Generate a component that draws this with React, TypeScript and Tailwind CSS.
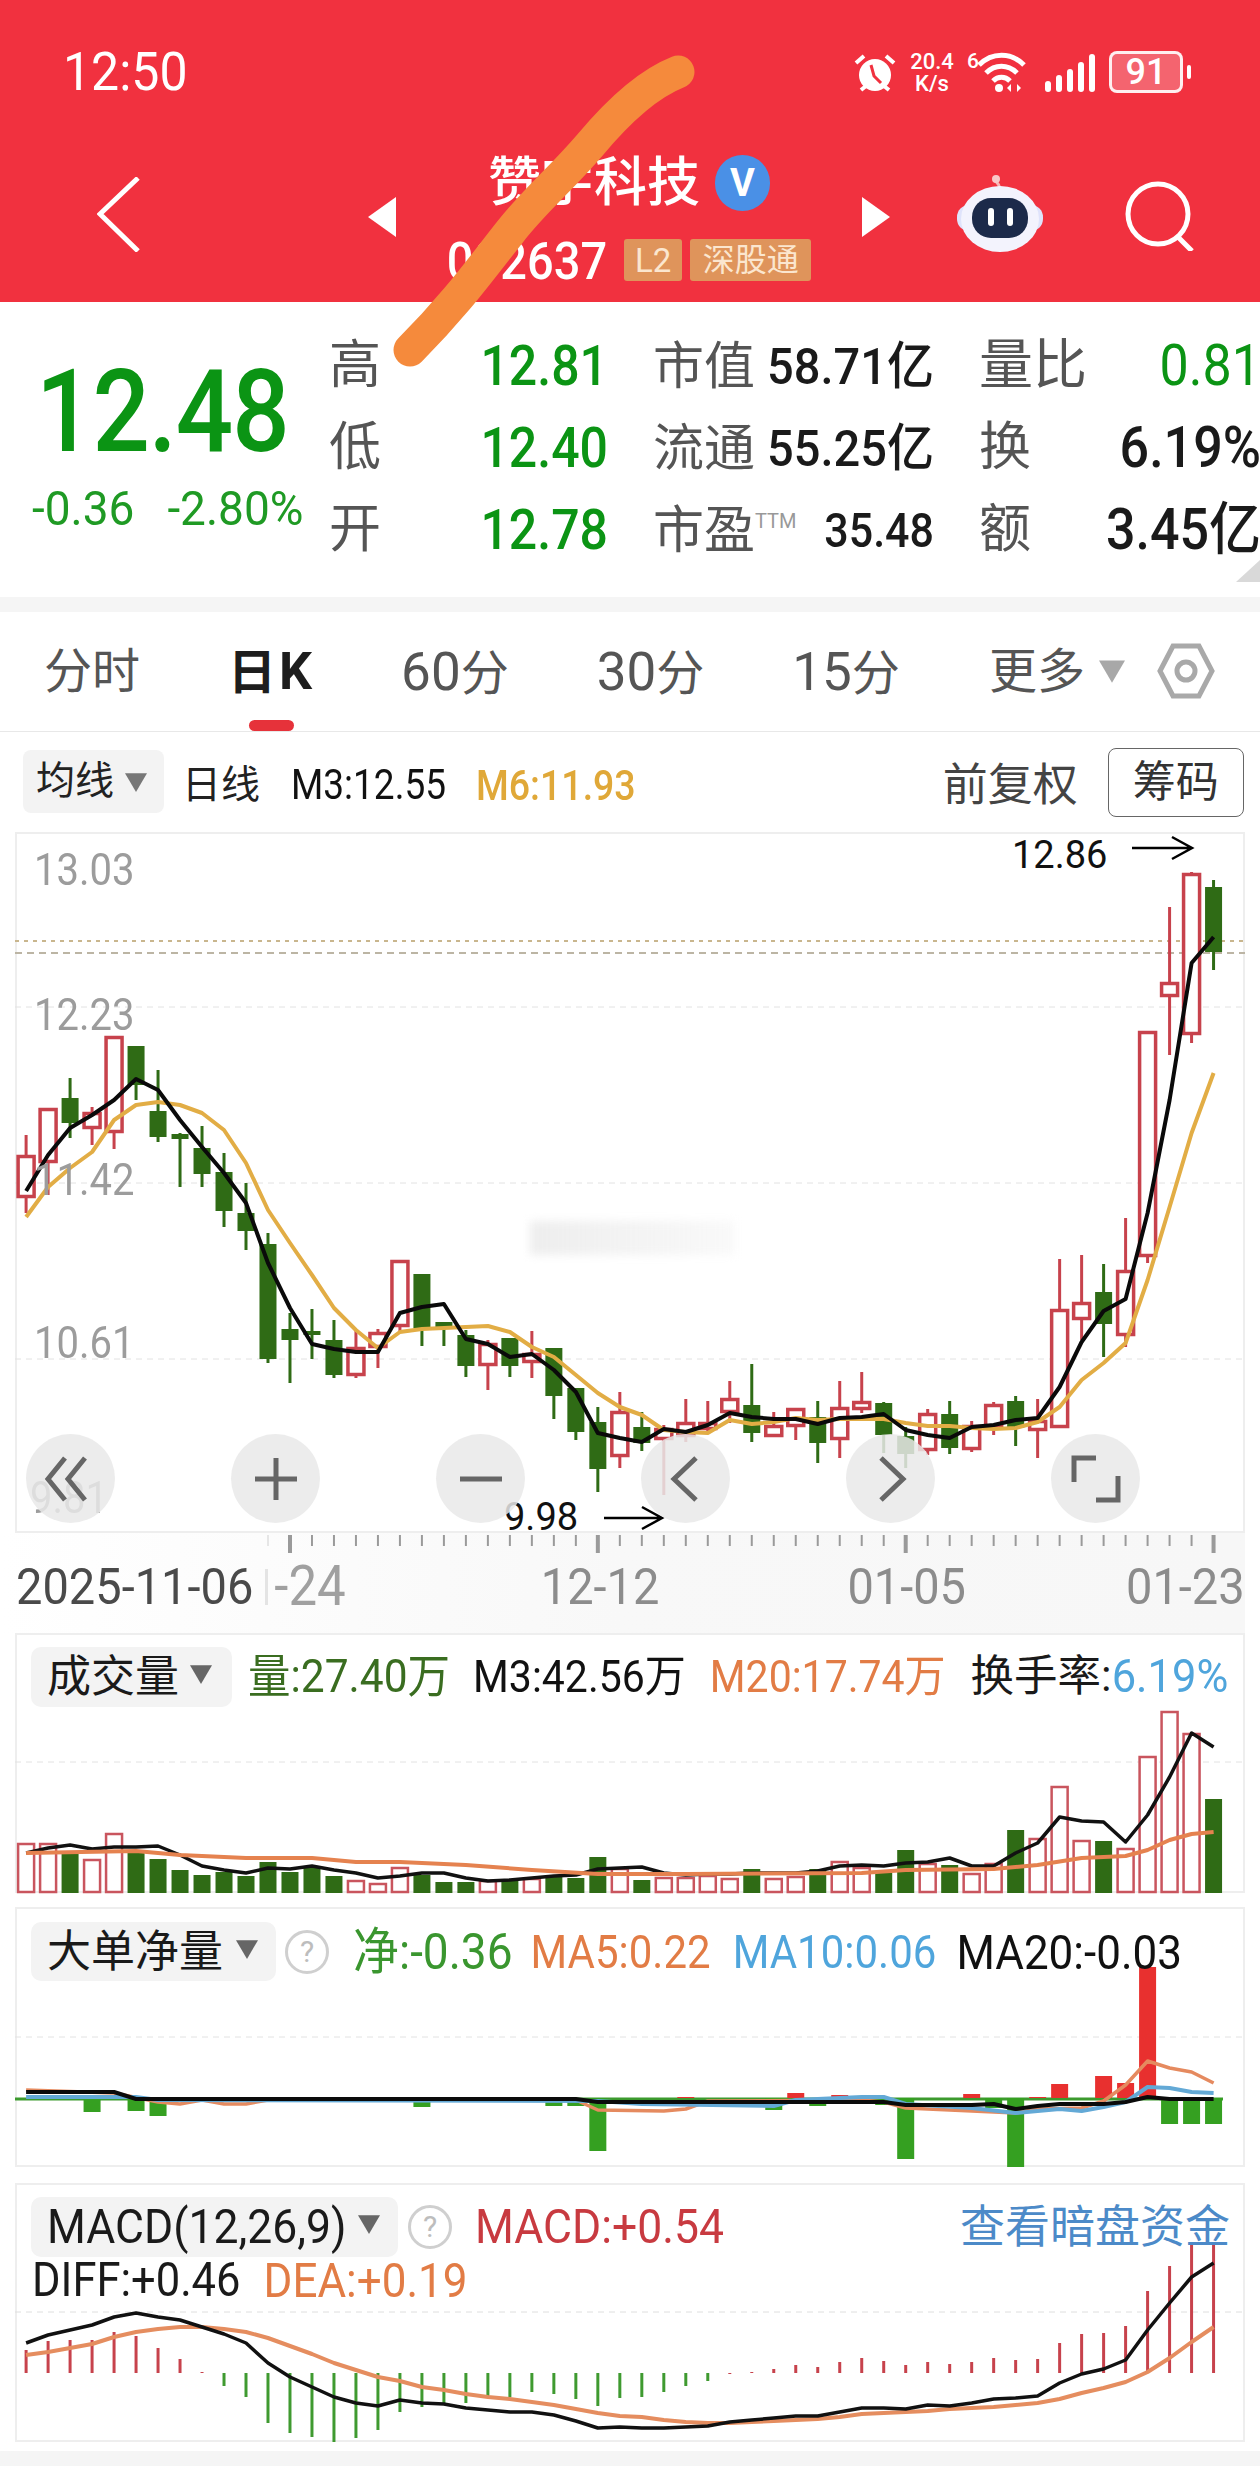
import React from "react";

const X = (i: number) => 26.1 + 21.99 * i;
const pts = (a: number[]) => a.map((y, i) => `${X(i).toFixed(1)},${y}`).join(" ");
const sparse = (a: [number, number][]) => a.map(([i, y]) => `${X(i).toFixed(1)},${y}`).join(" ");

const RED = "#c7424c";
const GREEN = "#2f6b15";

type C = ["r" | "g", number, number, number, number];
const candles: C[] = [
  ["r",1135,1213,1155,1198],["r",1108,1195,1108,1163],["g",1078,1138,1098,1123],["r",1107,1145,1112,1129],["r",1036,1149,1036,1133],
  ["g",1046,1100,1046,1085],["g",1070,1142,1111,1137],["g",1133,1187,1134,1139],["g",1126,1187,1148,1174],["g",1153,1227,1172,1211],
  ["g",1183,1250,1213,1231],["g",1233,1363,1244,1359],["g",1313,1383,1329,1340],["g",1309,1359,1331,1335],["g",1320,1378,1340,1375],
  ["r",1330,1378,1347,1376],["r",1329,1368,1332,1348],["r",1260,1333,1260,1327],["g",1274,1346,1274,1328],["g",1322,1346,1322,1328],
  ["g",1330,1377,1335,1366],["r",1340,1390,1343,1366],["g",1338,1377,1338,1366],["r",1331,1378,1353,1363],["g",1348,1419,1348,1396],
  ["g",1388,1440,1388,1432],["g",1407,1492,1422,1469],["r",1392,1468,1411,1457],["g",1412,1451,1427,1443],["r",1425,1495,1428,1440],
  ["r",1399,1442,1422,1437],["r",1401,1433,1422,1430],["r",1381,1423,1398,1413],["g",1364,1442,1405,1433],["r",1412,1437,1425,1437],
  ["r",1408,1440,1408,1427],["g",1401,1463,1417,1443],["r",1381,1458,1407,1440],["r",1372,1413,1401,1410],["g",1402,1453,1403,1435],
  ["g",1427,1468,1436,1454],["r",1409,1455,1413,1451],["g",1401,1454,1414,1448],["r",1421,1452,1425,1450],["r",1402,1435,1404,1428],
  ["g",1396,1446,1401,1428],["r",1399,1458,1420,1431],["r",1259,1428,1309,1428],["r",1255,1340,1302,1320],["g",1264,1357,1292,1324],
  ["r",1218,1347,1270,1336],["r",1031,1263,1031,1257],["r",907,1055,982,997],["r",872,1043,873,1035],["g",880,970,887,952],
];
const m3 = [1191,1155,1128,1115,1100,1079,1090,1120,1147,1173,1203,1263,1308,1344,1349,1352,1352,1313,1307,1304,1339,1344,1357,1354,1370,1392,1433,1438,1442,1429,1432,1425,1413,1417,1419,1419,1424,1418,1417,1414,1430,1435,1438,1427,1425,1420,1418,1387,1342,1311,1299,1213,1100,963,937];
const m6 = [1217,1187,1168,1152,1120,1105,1102,1105,1113,1130,1163,1210,1243,1275,1308,1330,1348,1332,1329,1328,1327,1326,1332,1347,1357,1375,1393,1407,1415,1430,1432,1433,1420,1424,1422,1418,1420,1419,1419,1419,1423,1426,1426,1428,1429,1428,1422,1407,1380,1363,1343,1280,1207,1133,1073];

const vol = [1843,1843,1853,1859,1833,1853,1859,1870,1875,1872,1876,1862,1872,1868,1876,1880,1883,1867,1875,1882,1882,1880,1880,1878,1875,1878,1857,1868,1880,1877,1877,1875,1878,1869,1878,1876,1869,1861,1867,1873,1850,1863,1865,1873,1863,1830,1838,1786,1840,1841,1848,1756,1711,1733,1799];
const volBlack = [1853,1848,1845,1849,1847,1847,1846,1855,1866,1870,1873,1868,1869,1866,1870,1873,1878,1876,1873,1873,1878,1881,1880,1878,1876,1875,1869,1868,1867,1873,1875,1874,1874,1873,1873,1873,1871,1866,1865,1866,1863,1862,1858,1866,1866,1853,1843,1817,1821,1822,1842,1815,1777,1733,1747];
const volOrange: [number, number][] = [[0,1853],[5,1851],[7,1855],[10,1858],[13,1858],[15,1862],[17,1862],[20,1865],[23,1870],[26,1874],[30,1874],[38,1873],[40,1870],[44,1869],[46,1865],[48,1858],[50,1856],[51,1850],[52,1840],[53,1834],[54,1832]];

const bigBars: [number, number, "r" | "g"][] = [[3,2112,"g"],[5,2111,"g"],[6,2116,"g"],[18,2107,"g"],[25,2106,"g"],[26,2151,"g"],[24,2106,"g"],[30,2097,"r"],[34,2110,"g"],[35,2093,"r"],[36,2106,"g"],[37,2095,"r"],[39,2105,"g"],[40,2159,"g"],[43,2094,"r"],[44,2108,"g"],[45,2167,"g"],[46,2097,"r"],[47,2084,"r"],[49,2076,"r"],[50,2083,"r"],[51,1967,"r"],[52,2124,"g"],[53,2124,"g"],[54,2124,"g"]];
const bigOrange: [number, number][] = [[0,2090],[4,2093],[6,2102],[7,2104],[8,2100],[9,2104],[10,2104],[11,2100],[25,2100],[26,2110],[29,2111],[30,2109],[31,2101],[38,2100],[39,2102],[40,2108],[45,2113],[46,2109],[48,2108],[49,2101],[50,2085],[51,2061],[52,2068],[53,2072],[54,2083]];
const bigBlue: [number, number][] = [[0,2097],[5,2097],[6,2100],[26,2101],[28,2104],[34,2106],[35,2100],[38,2097],[39,2097],[40,2104],[43,2108],[45,2113],[46,2111],[47,2109],[48,2111],[49,2107],[50,2102],[51,2087],[52,2088],[53,2092],[54,2093]];
const bigBlack: [number, number][] = [[0,2092],[4,2092],[5,2099],[25,2099],[26,2102],[39,2102],[40,2105],[43,2105],[44,2104],[45,2109],[46,2106],[47,2104],[49,2104],[50,2102],[51,2097],[52,2099],[54,2099]];

const macd = [2350,2341,2340,2340,2332,2336,2348,2359,2372,2386,2397,2423,2433,2437,2442,2438,2430,2412,2407,2403,2403,2397,2397,2392,2394,2399,2406,2398,2397,2392,2386,2381,2374,2372,2369,2365,2367,2362,2358,2361,2365,2362,2364,2362,2358,2360,2359,2343,2334,2333,2326,2291,2266,2243,2243];
const macdBlack = [2343,2335,2330,2325,2317,2313,2317,2320,2327,2334,2343,2363,2377,2387,2397,2403,2406,2400,2403,2404,2408,2410,2412,2412,2415,2421,2428,2427,2428,2428,2427,2426,2422,2420,2418,2416,2416,2412,2408,2408,2409,2405,2406,2403,2399,2398,2396,2383,2374,2369,2360,2330,2303,2277,2263];
const macdOrange = [2355,2352,2348,2344,2337,2332,2329,2327,2327,2329,2332,2338,2346,2354,2363,2370,2377,2381,2387,2390,2394,2397,2399,2402,2405,2409,2413,2416,2417,2420,2422,2423,2423,2422,2421,2420,2419,2417,2414,2413,2412,2411,2409,2408,2407,2405,2403,2399,2393,2388,2382,2372,2358,2342,2327];

const Tri = ({ className, color }: { className: string; color: string }) => (
  <svg viewBox="0 0 20 20" className={className}><polygon points="0,2 20,2 10,19" fill={color} /></svg>
);
const Help = ({ className }: { className: string }) => (
  <div className={`flex h-[44px] w-[44px] items-center justify-center rounded-full border-[3px] border-[#cfcfcf] text-[30px] leading-none text-[#bdbdbd] ${className}`}>?</div>
);
const Round = ({ children }: { children: React.ReactNode }) => (
  <div className="flex h-[89px] w-[89px] items-center justify-center rounded-full bg-[#e9e9e9]/85">
    <svg viewBox="0 0 60 60" className="h-[60px] w-[60px]" fill="none" stroke="#666" strokeWidth="5">{children}</svg>
  </div>
);

function App() {
  return (
    <div className="relative h-[2479px] w-[1260px] overflow-hidden bg-white font-['Roboto','Noto_Sans_CJK_SC',sans-serif]">
      {/* header */}
      <header className="h-[302px] bg-[#f1313f] text-white">
        <div className="flex h-[150px] items-start pl-[63px] pt-[46px]">
          <span className="inline-block w-[125px] scale-y-[1.08] text-[50px] leading-[52px]">12:50</span>
          <svg viewBox="0 0 42 42" className="ml-[666px] mt-[6px] h-[42px] w-[42px]" fill="none">
            <circle cx="21" cy="23" r="16" fill="#fff" />
            <path d="M17 13l3 11 7 7" strokeWidth="3" stroke="#f1313f" />
            <path d="M2 11l8-7M40 11l-8-7M7 38l5-4M35 38l-5-4" strokeWidth="4" stroke="#fff" />
          </svg>
          <div className="ml-[10px] mt-[5px] w-[52px] text-center text-[22px] font-medium leading-[22px]">20.4<br />K/s</div>
          <span className="ml-[9px] mt-[4px] text-[21px] font-medium leading-[22px]">6</span>
          <svg viewBox="0 0 50 42" className="ml-[-3px] mt-[6px] h-[42px] w-[50px]" fill="none" stroke="#fff" strokeWidth="5">
            <path d="M3 13c13-13 32-13 45 0M10 21c9-9 22-9 31 0M17 29c5-5 12-5 17 0" />
            <circle cx="23" cy="36" r="4" fill="#fff" stroke="none" />
            <path d="M35 32l-4 4 4 4zM41 32l4 4-4 4z" fill="#fff" stroke="none" />
          </svg>
          <svg viewBox="0 0 50 38" className="ml-[19px] mt-[8px] h-[38px] w-[50px]" fill="#fff">
            <rect x="0" y="27" width="6" height="11" rx="3" /><rect x="11" y="21" width="6" height="17" rx="3" /><rect x="22" y="15" width="6" height="23" rx="3" /><rect x="33" y="8" width="6" height="30" rx="3" /><rect x="44" y="0" width="6" height="38" rx="3" />
          </svg>
          <div className="ml-[14px] mt-[5px] flex h-[42px] w-[74px] items-center justify-center rounded-[8px] border-[3px] border-white/90 bg-white/25 text-[36px] font-medium leading-none">91</div>
          <div className="ml-[4px] mt-[19px] h-[14px] w-[4px] rounded-full bg-white" />
        </div>
        <div className="flex items-start pl-[97px]">
          <svg viewBox="0 0 43 75" className="mt-[27px] h-[75px] w-[43px]" fill="none" stroke="#fff" strokeWidth="5"><path d="M41 1L3 37l38 37" /></svg>
          <svg viewBox="0 0 28 40" className="ml-[228px] mt-[47px] h-[40px] w-[28px]"><polygon points="28,0 0,20 28,40" fill="#fff" /></svg>
          <div className="flex w-[466px] flex-col items-center">
            <div className="mt-[5px] flex h-[56px] items-center">
              <span className="text-[53px] font-medium leading-none">赞宇科技</span>
              <div className="ml-[15px] flex h-[56px] w-[55px] items-center justify-center rounded-full bg-[#4a90e6] text-[38px] font-bold leading-none">V</div>
            </div>
            <div className="mt-[28px] flex h-[42px] items-center">
              <span className="inline-block scale-y-[1.12] text-[47px] font-medium leading-none">002637</span>
              <div className="ml-[17px] flex h-[42px] w-[58px] items-center justify-center rounded-[3px] bg-[#df945b] text-[33px] leading-none text-[#fbe6cf]">L2</div>
              <div className="ml-[8px] flex h-[42px] w-[121px] items-center justify-center rounded-[3px] bg-[#df945b] text-[32px] leading-none text-[#fbe6cf]">深股通</div>
            </div>
          </div>
          <svg viewBox="0 0 28 40" className="mt-[47px] h-[40px] w-[28px]"><polygon points="0,0 28,20 0,40" fill="#fff" /></svg>
          <svg viewBox="0 0 86 78" className="ml-[67px] mt-[25px] h-[78px] w-[86px]">
            <path d="M43 14C42 6 37 8 38 3" fill="none" stroke="#f7b7b7" strokeWidth="3" />
            <circle cx="39" cy="4" r="4" fill="#f9c7c7" />
            <rect x="0" y="30" width="86" height="26" rx="12" fill="#dfe3fb" />
            <ellipse cx="43" cy="44" rx="39" ry="33" fill="#f3f3fd" />
            <rect x="15" y="23" width="56" height="40" rx="19" fill="#1c2a4a" />
            <rect x="31" y="33" width="6" height="18" rx="3" fill="#fff" />
            <rect x="50" y="33" width="6" height="18" rx="3" fill="#fff" />
          </svg>
          <svg viewBox="0 0 70 70" className="ml-[82px] mt-[31px] h-[70px] w-[70px]" fill="none" stroke="#fff" strokeWidth="5"><circle cx="33" cy="33" r="30" /><path d="M52 55l15 15" /></svg>
        </div>
      </header>

      {/* orange scribble */}
      <svg className="pointer-events-none absolute left-0 top-0 z-20 h-[400px] w-[800px]" viewBox="0 0 800 400" fill="none">
        <path d="M678 72C645 85 615 115 590 145C560 180 535 200 510 232C480 270 455 305 410 350" stroke="#f58a3c" strokeWidth="33" strokeLinecap="round" />
      </svg>

      {/* quote */}
      <section className="flex h-[295px] items-start">
        <div className="ml-[32px] flex w-[297px] flex-col pt-[62px]">
          <span className="ml-[4px] inline-block scale-y-[1.13] text-[101px] font-medium leading-[98px] tracking-[-1px] text-[#0b9414]">12.48</span>
          <div className="mt-[26px] flex gap-[33px] whitespace-nowrap text-[46px] leading-[40px] text-[#1f9a24]">
            <span className="inline-block scale-y-[1.05]">-0.36</span><span className="inline-block scale-y-[1.05]">-2.80%</span>
          </div>
        </div>
        <div className="grid w-[931px] grid-cols-[279px_281px_282px] gap-x-[45px] gap-y-[30px] pt-[38px]">
          {[
            ["高", "12.81", "市值", "58.71", "量比", "0.81", "text-[#0b9414]", "亿"],
            ["低", "12.40", "流通", "55.25", "换", "6.19%", "text-[#1a1a1a] font-medium", "亿"],
            ["开", "12.78", "市盈", "35.48", "额", "3.45亿", "text-[#1a1a1a] font-medium", ""],
          ].map((r, i) => (
            <React.Fragment key={i}>
              <div className="flex h-[52px] items-center justify-between">
                <span className="text-[52px] leading-none text-[#555]">{r[0]}</span>
                <span className="inline-block scale-y-[1.1] text-[50px] font-medium leading-none text-[#0b9414]">{r[1]}</span>
              </div>
              <div className="flex h-[52px] items-center justify-between">
                <span className="flex items-start text-[51px] leading-none text-[#555]">{r[2]}{i === 2 && <span className="mt-[6px] text-[20px] leading-none text-[#999]">TTM</span>}</span>
                {i === 2 ? (
                  <span className="inline-block scale-y-[1.12] text-[43px] font-medium leading-none text-[#1a1a1a]">{r[3]}</span>
                ) : (
                  <span className="inline-block scale-y-[1.08] text-[47px] font-medium leading-none text-[#1a1a1a]">{r[3]}{r[7]}</span>
                )}
              </div>
              <div className="flex h-[52px] items-center justify-between">
                <span className={i === 0 ? "text-[54px] leading-none text-[#555]" : "text-[52px] leading-none text-[#555]"}>{r[4]}</span>
                <span className={`inline-block scale-y-[1.1] text-[52px] leading-none ${r[6]}`}>{r[5]}</span>
              </div>
            </React.Fragment>
          ))}
        </div>
      </section>
      <svg viewBox="0 0 24 22" className="absolute left-[1236px] top-[560px] h-[22px] w-[24px]"><polygon points="24,0 24,22 0,22" fill="#d9d9d9" /></svg>

      <div className="h-[15px] bg-[#f5f5f5]" />

      {/* tabs */}
      <nav className="relative flex h-[120px] items-start border-b border-[#e8e8e8] pt-[32px] text-[48px] leading-[56px] text-[#555]">
        <span className="ml-[44px]">分时</span>
        <span className="ml-[88px] flex items-baseline font-bold text-[#1d1d1d]">日<span className="ml-[3px] text-[52px]">K</span></span>
        <span className="ml-[89px]"><span className="text-[53px]">60</span>分</span>
        <span className="ml-[88px]"><span className="text-[53px]">30</span>分</span>
        <span className="ml-[88px]"><span className="text-[53px]">15</span>分</span>
        <span className="ml-[89px]">更多</span>
        <Tri className="ml-[14px] mt-[14px] h-[26px] w-[26px]" color="#a8a8a8" />
        <svg viewBox="0 0 58 56" className="ml-[32px] mt-[-1px] h-[56px] w-[58px]" fill="none" stroke="#a9a9a9" strokeWidth="5"><polygon points="16,3 42,3 55,28 42,53 16,53 3,28" /><circle cx="29" cy="28" r="9" /></svg>
        <div className="absolute bottom-0 left-[249px] h-[11px] w-[45px] rounded-full bg-[#e6323a]" />
      </nav>

      {/* toolbar */}
      <div className="flex h-[100px] items-start pl-[23px]">
        <div className="mt-[18px] flex h-[63px] w-[141px] items-center rounded-[8px] bg-[#f3f3f3] pl-[13px]">
          <span className="text-[39px] leading-none text-[#222]">均线</span>
          <Tri className="ml-[11px] h-[22px] w-[22px]" color="#777" />
        </div>
        <span className="ml-[18px] mt-[30px] text-[39px] leading-[46px] text-[#222]">日线</span>
        <span className="ml-[31px] mt-[30px] inline-block scale-y-[1.15] text-[37px] leading-[46px] text-[#111]">M3:12.55</span>
        <span className="ml-[30px] mt-[30px] inline-block scale-y-[1.15] text-[37.5px] font-medium leading-[46px] text-[#e0a838]">M6:11.93</span>
        <span className="ml-[307px] mt-[28px] text-[45px] leading-[52px] text-[#444]">前复权</span>
        <div className="ml-[30px] mt-[16px] flex h-[69px] w-[136px] items-center justify-center rounded-[8px] border border-[#666] text-[43px] leading-none text-[#333]">筹码</div>
      </div>

      {/* k-line chart */}
      <div className="relative mx-[15px] h-[701px] w-[1230px] border-2 border-[#eeeeee]">
        <svg className="absolute inset-0 h-[697px] w-[1226px] overflow-visible" viewBox="17 834 1226 697" fill="none">
          <line x1="15" x2="1245" y1="941" y2="941" stroke="#c9b68e" strokeWidth="2" strokeDasharray="4 5" />
          <line x1="15" x2="1245" y1="953" y2="953" stroke="#bcb5a4" strokeWidth="2" strokeDasharray="7 5" />
          {[1007, 1183, 1359].map((y) => <line key={y} x1="15" x2="1245" y1={y} y2={y} stroke="#e2e2e2" strokeWidth="1" strokeDasharray="6 5" />)}
          {candles.map((c, i) => {
            const x = X(i);
            return c[0] === "r" ? (
              <g key={i}>
                <line x1={x} x2={x} y1={c[1]} y2={c[2]} stroke={RED} strokeWidth="3" />
                <rect x={x - 8} y={c[3] + 1.5} width="16" height={Math.max(c[4] - c[3] - 3, 2)} fill="#fff" stroke={RED} strokeWidth="3.5" />
              </g>
            ) : (
              <g key={i}>
                <line x1={x} x2={x} y1={c[1]} y2={c[2]} stroke={GREEN} strokeWidth="3" />
                <rect x={x - 8.5} y={c[3]} width="17" height={c[4] - c[3]} fill={GREEN} />
              </g>
            );
          })}
          <polyline points={pts(m6)} stroke="#e2ad45" strokeWidth="4" strokeLinejoin="round" />
          <polyline points={pts(m3)} stroke="#0a0a0a" strokeWidth="4" strokeLinejoin="round" />
          <path d="M1132 848h58M1172 837l20 11-20 11" stroke="#000" strokeWidth="2.5" />
          <path d="M604 1518h58M642 1507l20 11-20 11" stroke="#000" strokeWidth="2.5" />
        </svg>
        {[["13.03", "left-[17px] top-[12px]"], ["12.23", "left-[17px] top-[157px]"], ["11.42", "left-[17px] top-[322px]"], ["10.61", "left-[17px] top-[485px]"], ["9.81", "left-[13px] top-[640px]"]].map(([t, c]) => (
          <span key={t} className={`absolute inline-block scale-y-[1.13] text-[40px] leading-[48px] text-[#9c9c9c] ${c}`}>{t}</span>
        ))}
        <span className="absolute left-[995px] top-[-1px] text-[38px] leading-[44px] text-[#111]">12.86</span>
        <span className="absolute left-[487px] top-[661px] text-[38px] leading-[44px] text-[#111]">9.98</span>
        <div className="absolute left-[513px] top-[387px] h-[34px] w-[205px] bg-linear-to-r from-[#e6e6e6]/70 to-[#f4f4f4]/50 blur-[4px]" />
        <div className="absolute left-[9px] top-[600px] flex w-[1114px] items-center justify-between">
          <Round><path d="M24 9L7 30l17 21M44 9L27 30l17 21" /></Round>
          <Round><path d="M30 9v42M9 30h42" /></Round>
          <Round><path d="M9 30h42" /></Round>
          <Round><path d="M40 9L18 30l22 21" /></Round>
          <Round><path d="M20 9l22 21-22 21" /></Round>
          <Round><path d="M30 9H8v24M30 51h22V27" /></Round>
        </div>
      </div>

      {/* x axis */}
      <div className="relative mr-[15px] h-[100px] bg-linear-to-r from-white via-[#f8f8f8] to-[#f7f7f7]">
        <svg className="absolute left-0 top-0 h-[24px] w-[1245px]" viewBox="0 1533 1245 24" fill="none">
          {Array.from({ length: 44 }, (_, k) => k + 11).map((i) => {
            const big = i === 12 || i === 26 || i === 40 || i === 54;
            return <line key={i} x1={X(i)} x2={X(i)} y1="1535" y2={big ? 1553 : 1546} stroke={i === 11 ? "#e6e6e6" : "#9a9a9a"} strokeWidth={big ? 4 : 2} />;
          })}
        </svg>
        <div className="flex items-center whitespace-nowrap pl-[16px] pt-[29px] text-[47px] leading-[50px] text-[#8c8c8c]">
          <span className="inline-block shrink-0 scale-y-[1.08] text-[#4a4a4a]">2025-11-06</span>
          <span className="ml-[12px] h-[36px] w-[3px] shrink-0 bg-[#e4e4e4]" />
          <span className="ml-[6px] inline-block shrink-0 scale-y-[1.08] text-[51px] leading-[50px] text-[#a0a0a0]">-24</span>
          <span className="ml-[195px] inline-block shrink-0 scale-y-[1.08]">12-12</span>
          <span className="ml-[188px] inline-block shrink-0 scale-y-[1.08]">01-05</span>
          <span className="ml-[160px] inline-block shrink-0 scale-y-[1.08]">01-23</span>
        </div>
      </div>

      {/* volume */}
      <div className="relative mx-[15px] h-[260px] w-[1230px] border-2 border-[#eeeeee]">
        <svg className="absolute inset-0 h-[256px] w-[1226px] overflow-visible" viewBox="17 1635 1226 256" fill="none">
          <line x1="15" x2="1245" y1="1762" y2="1762" stroke="#e2e2e2" strokeDasharray="6 5" />
          {vol.map((y, i) => {
            const g = candles[i][0] === "g";
            return g
              ? <rect key={i} x={X(i) - 8.5} y={y} width="17" height={1893 - y} fill={GREEN} />
              : <rect key={i} x={X(i) - 8} y={y + 1} width="16" height={1891 - y} fill="#fff" stroke="#c9555e" strokeWidth="2.5" />;
          })}
          <polyline points={pts(volBlack)} stroke="#111" strokeWidth="3.5" strokeLinejoin="round" />
          <polyline points={sparse(volOrange)} stroke="#e5824f" strokeWidth="4" strokeLinejoin="round" />
        </svg>
        <div className="relative flex items-center whitespace-nowrap pl-[14px] pt-[12px]">
          <div className="flex h-[60px] w-[201px] items-center rounded-[10px] bg-[#f3f3f3] pl-[16px]">
            <span className="text-[44px] leading-none text-[#1a1a1a]">成交量</span>
            <Tri className="ml-[11px] mt-[-6px] h-[22px] w-[22px]" color="#666" />
          </div>
          <span className="ml-[16px] inline-block scale-y-[1.08] text-[42.5px] leading-none text-[#3a6d20]">量:27.40万</span>
          <span className="ml-[23px] inline-block scale-y-[1.08] text-[41px] leading-none text-[#111]">M3:42.56万</span>
          <span className="ml-[24px] inline-block scale-y-[1.08] text-[41px] leading-none text-[#e27c45]">M20:17.74万</span>
          <span className="ml-[25px] text-[43.5px] leading-none text-[#1a1a1a]">换手率:<span className="inline-block scale-y-[1.08] text-[#4fa5dc]">6.19%</span></span>
        </div>
      </div>

      {/* big orders */}
      <div className="relative ml-[15px] mt-[14px] h-[260px] w-[1230px] border-2 border-[#eeeeee]">
        <svg className="absolute inset-0 h-[256px] w-[1226px] overflow-visible" viewBox="17 1909 1226 256" fill="none">
          <line x1="15" x2="1245" y1="2037" y2="2037" stroke="#e2e2e2" strokeDasharray="6 5" />
          <line x1="15" x2="1223" y1="2099" y2="2099" stroke="#3c9a2e" strokeWidth="3" />
          {bigBars.map(([i, y, c]) => (
            <rect key={i} x={X(i) - 8.5} y={Math.min(y, 2098)} width="17" height={Math.abs(y - 2098)} fill={c === "g" ? "#35a021" : "#e8302f"} />
          ))}
          <polyline points={sparse(bigOrange)} stroke="#e58a5f" strokeWidth="3.5" strokeLinejoin="round" />
          <polyline points={sparse(bigBlue)} stroke="#63a9d6" strokeWidth="4" strokeLinejoin="round" />
          <polyline points={sparse(bigBlack)} stroke="#0b0b0b" strokeWidth="4" strokeLinejoin="round" />
        </svg>
        <div className="relative flex items-center whitespace-nowrap pl-[14px] pt-[13px]">
          <div className="flex h-[59px] w-[245px] items-center rounded-[10px] bg-[#f3f3f3] pl-[16px]">
            <span className="text-[44px] leading-none text-[#1a1a1a]">大单净量</span>
            <Tri className="ml-[13px] mt-[-6px] h-[22px] w-[22px]" color="#666" />
          </div>
          <Help className="ml-[9px]" />
          <span className="ml-[24px] inline-block scale-y-[1.08] text-[46px] leading-none text-[#3a962f]">净:-0.36</span>
          <span className="ml-[18px] inline-block scale-y-[1.12] text-[42px] leading-none text-[#e27c45]">MA5:0.22</span>
          <span className="ml-[22px] inline-block scale-y-[1.12] text-[42px] leading-none text-[#4fa5dc]">MA10:0.06</span>
          <span className="ml-[20px] inline-block scale-y-[1.1] text-[44px] leading-none text-[#111]">MA20:-0.03</span>
        </div>
      </div>

      {/* macd */}
      <div className="relative ml-[15px] mt-[16px] h-[259px] w-[1230px] border-2 border-[#eeeeee]">
        <svg className="absolute inset-0 h-[255px] w-[1226px] overflow-visible" viewBox="17 2185 1226 255" fill="none">
          <line x1="15" x2="1245" y1="2312" y2="2312" stroke="#dedede" strokeDasharray="6 5" />
          {macd.map((y, i) => (
            <line key={i} x1={X(i)} x2={X(i)} y1={2373} y2={y} stroke={i < 9 || i > 31 ? RED : "#3f9a30"} strokeWidth="3" />
          ))}
          <polyline points={pts(macdOrange)} stroke="#e58d5f" strokeWidth="4" strokeLinejoin="round" />
          <polyline points={pts(macdBlack)} stroke="#111" strokeWidth="3.5" strokeLinejoin="round" />
        </svg>
        <div className="relative flex items-center whitespace-nowrap pl-[14px] pt-[12px]">
          <div className="flex h-[60px] w-[367px] items-center rounded-[10px] bg-[#f3f3f3] pl-[16px]">
            <span className="inline-block scale-y-[1.1] text-[44.5px] leading-none text-[#1a1a1a]">MACD(12,26,9)</span>
            <Tri className="ml-[12px] mt-[-6px] h-[22px] w-[22px]" color="#666" />
          </div>
          <Help className="ml-[10px]" />
          <span className="ml-[23px] inline-block scale-y-[1.1] text-[44.5px] leading-none text-[#c83a40]">MACD:+0.54</span>
          <span className="ml-[236px] text-[45px] leading-none text-[#4c8ac8]">查看暗盘资金</span>
        </div>
        <div className="relative flex pl-[15px] pt-[1px] text-[43.5px] leading-[46px]">
          <span className="inline-block scale-y-[1.1] text-[#1a1a1a]">DIFF:+0.46</span>
          <span className="ml-[23px] inline-block scale-y-[1.1] text-[44px] text-[#e27c45]">DEA:+0.19</span>
        </div>
      </div>

      <div className="mt-[9px] h-[15px] bg-[#f5f5f5]" />
    </div>
  );
}

export default App;
